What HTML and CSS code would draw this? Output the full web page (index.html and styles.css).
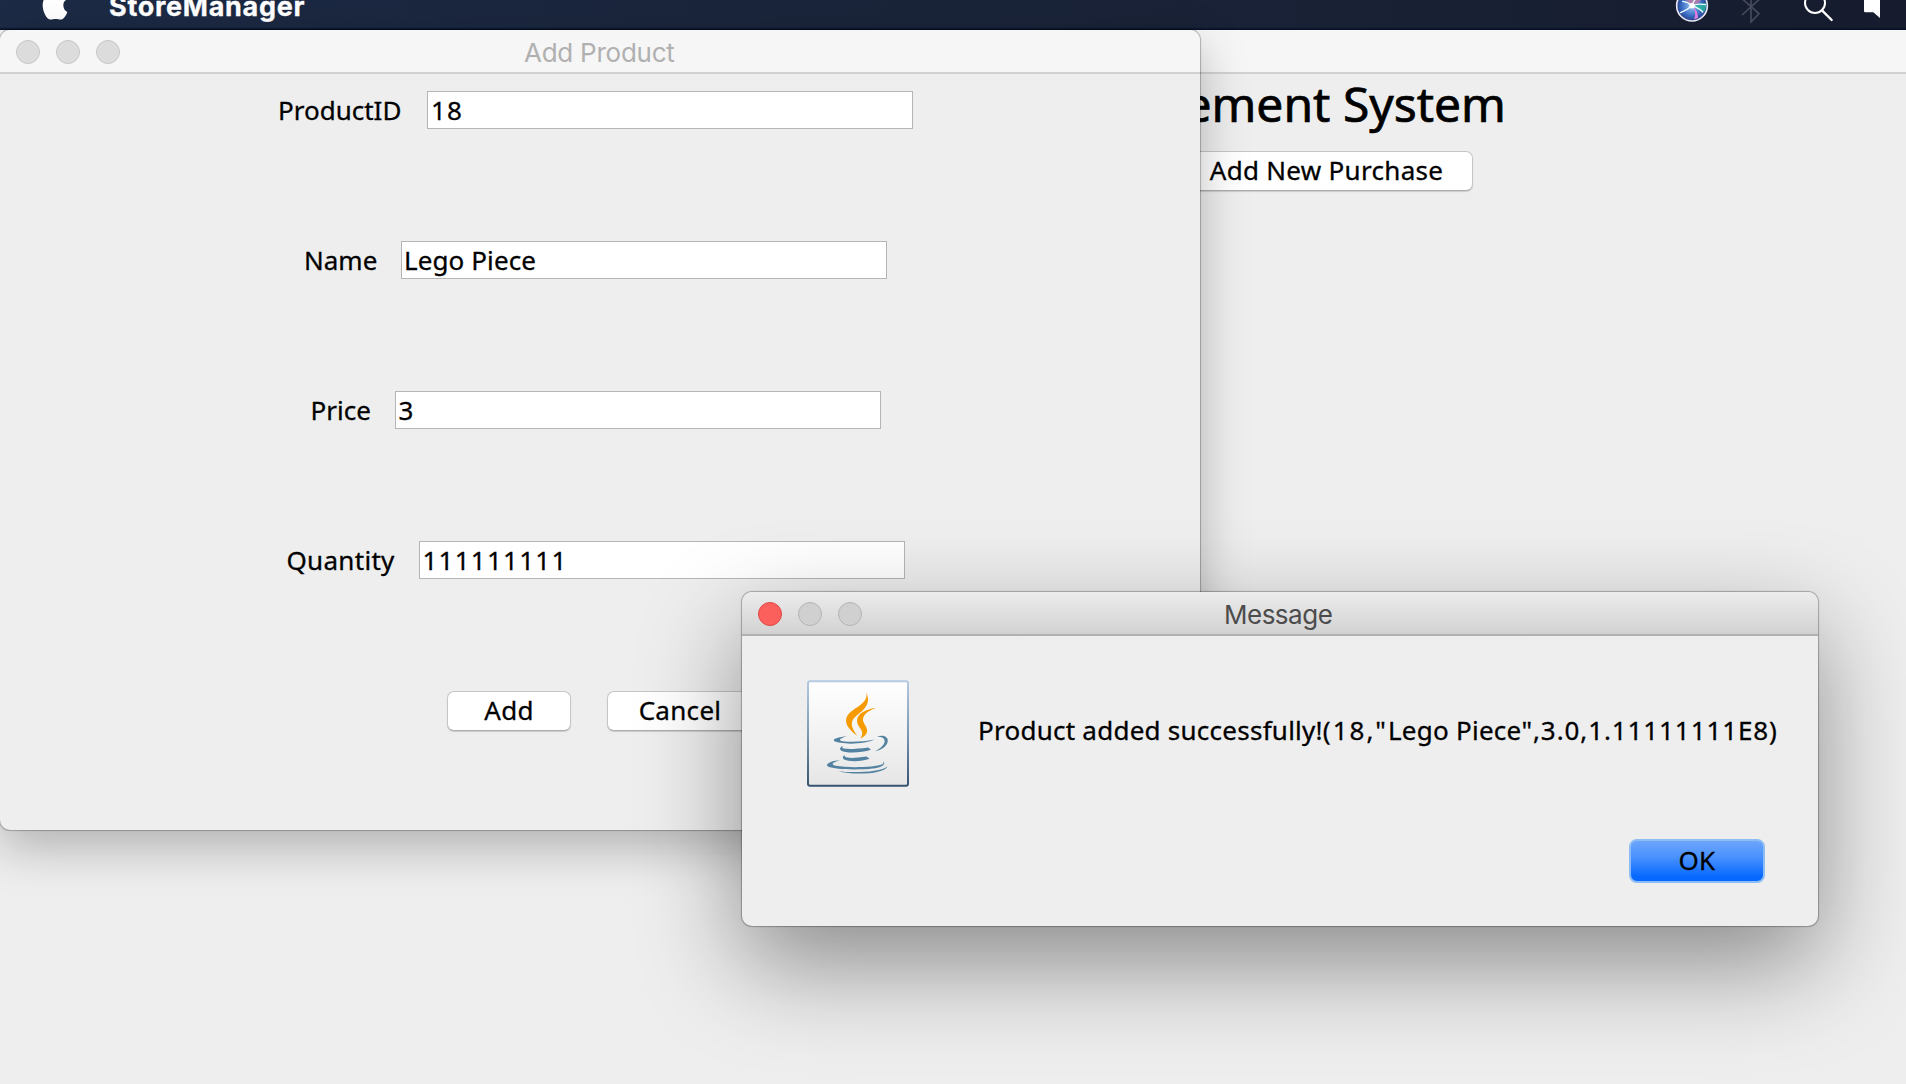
FILE: index.html
```html
<!DOCTYPE html>
<html lang="en">
<head>
<meta charset="utf-8">
<title>StoreManager</title>
<link rel="stylesheet" href="styles.css">
</head>
<body>
<div class="desktop">
  <header class="menubar">
    <svg class="apple" viewBox="0 0 81 60" aria-hidden="true"><path fill="#fff" d="M5 0H72C66 4 64 9 64 16c0 9 4 16 12 20-3 9-8 17-14 21-6 4-12 0-21 0s-15 4-21 0C11 52 3 34 2 18 2 10 3 5 5 0z"/></svg>
    <span class="app-name">StoreManager</span>
    <svg class="status" viewBox="0 0 900 90" aria-hidden="true">
      <defs>
        <radialGradient id="siri" cx=".5" cy=".5" r=".5"><stop offset="0" stop-color="#d9f4ff"/><stop offset=".3" stop-color="#6f9fe0"/><stop offset=".7" stop-color="#3568c0"/><stop offset="1" stop-color="#2a3f85"/></radialGradient>
      </defs>
      <circle cx="258" cy="17" r="46" fill="url(#siri)" stroke="#e8e6f4" stroke-width="5"/>
      <path d="M262 18Q296 0 290 -16L228 -22Q232 0 262 18z" fill="#b478a4" opacity=".85"/>
      <path d="M258 18L300 8Q302 30 292 36z" fill="#27b79b" opacity=".8"/>
      <path d="M258 18Q274 36 264 58L276 54Q276 30 258 18z" fill="#e87be0"/>
      <path d="M224 38Q246 28 258 17Q276 10 298 14M258 17Q246 6 230 4M258 17Q282 26 290 36M258 17Q264 0 272 -6" fill="none" stroke="#effcff" stroke-width="4" stroke-linecap="round"/>
      <circle cx="258" cy="17" r="8" fill="#fff"/>
      <path d="M408 -4L459 41L435 66V-20M408 45L461 -3" fill="none" stroke="#464b5b" stroke-width="5"/>
      <circle cx="627" cy="9" r="30" fill="none" stroke="#fff" stroke-width="6"/>
      <path d="M648 31L677 60" stroke="#fff" stroke-width="7" stroke-linecap="round"/>
      <path d="M774 0H822V54L802 37H778Q774 37 774 33z" fill="#fff"/>
    </svg>
  </header>

  <main class="window back">
    <div class="titlebar"></div>
    <h1 class="heading">Management System</h1>
    <div class="back-actions"><button class="btn purchase">Add New Purchase</button></div>
  </main>

  <section class="window form">
    <div class="titlebar">
      <i class="dot"></i><i class="dot"></i><i class="dot"></i>
      <span class="title t-form">Add Product</span>
    </div>
    <div class="fields">
      <label class="row"><span class="l-id">ProductID</span><span class="field">18</span></label>
      <label class="row"><span class="l-name">Name</span><span class="field alpha">Lego Piece</span></label>
      <label class="row"><span class="l-price">Price</span><span class="field">3</span></label>
      <label class="row"><span class="l-qty">Quantity</span><span class="field">111111111</span></label>
    </div>
    <div class="actions"><button class="btn add">Add</button><button class="btn cancel">Cancel</button></div>
  </section>

  <section class="window dialog">
    <div class="titlebar">
      <i class="dot close"></i><i class="dot"></i><i class="dot"></i>
      <span class="title t-msg">Message</span>
    </div>
    <div class="message">
      <svg class="java" viewBox="51 31 306 320" aria-hidden="true">
        <defs>
          <linearGradient id="frame" x1="0" y1="0" x2="0" y2="1"><stop offset="0" stop-color="#b5cae0"/><stop offset=".5" stop-color="#7c98b4"/><stop offset="1" stop-color="#36536f"/></linearGradient>
          <linearGradient id="paper" x1="0" y1="0" x2="0" y2="1"><stop offset="0" stop-color="#fff"/><stop offset="1" stop-color="#e6e6e6"/></linearGradient>
        </defs>
        <rect x="54" y="34" width="300" height="314" rx="6" fill="url(#paper)" stroke="url(#frame)" stroke-width="6"/>
        <g fill="#f59b00">
          <path d="M228 65C246 105 220 120 197 140C179 156 183 173 202 198C176 180 158 156 174 135C192 112 240 100 228 65z"/>
          <path d="M258 114C224 127 213 143 222 160C235 180 237 192 211 207C222 190 216 183 207 170C191 143 210 122 258 114z"/>
        </g>
        <g fill="#5382a1">
          <path d="M172 199C146 206 142 212 164 215C190 217 225 215 254 209C235 219 185 225 152 219C116 213 130 203 172 199z"/>
          <path d="M260 201C281 193 296 202 293 216C290 230 275 241 254 245C270 237 283 226 284 215C284 205 276 201 260 201z"/>
          <path d="M159 228C147 239 180 240 235 233L243 240C213 250 167 251 153 242C147 236 152 231 159 228z"/>
          <path d="M166 255C155 265 185 267 229 260L239 267C214 276 174 276 161 268C156 262 160 258 166 255z"/>
          <path d="M150 272C128 277 120 284 138 288C175 295 257 292 275 284C283 280 279 278 279 275C290 284 275 293 248 296C202 301 134 299 115 291C101 283 127 271 150 272z"/>
          <path d="M293 289C284 314 187 316 145 304C185 309 273 308 293 289z"/>
        </g>
      </svg>
      <p class="msg-text">Product added successfully!<span class="id-part">(18,"</span>Lego Piece<span class="num">",3.0,1.11111111E8)</span></p>
    </div>
    <div class="dialog-actions"><button class="btn ok">OK</button></div>
  </section>
</div>
</body>
</html>
```
FILE: styles.css
```css
* { box-sizing: border-box; }
body { margin: 0; }
.desktop { position: relative; width: 1906px; height: 1084px; overflow: hidden; background: #1c2a44; font: 26px/36px "Noto Sans", sans-serif; color: #000; -webkit-text-stroke: .3px; }
.menubar { display: flex; align-items: flex-start; height: 30px; background: linear-gradient(#0000 27px, #020e24), linear-gradient(90deg, #1c2a45, #1a2439 50%, #161c2e); }
.apple { width: 27px; height: 20px; margin-left: 42px; flex: none; }
.app-name { margin: -11px 0 0 40px; font: bold 27px/36px Inter, sans-serif; letter-spacing: .7px; color: #fff; white-space: nowrap; }
.status { width: 300px; height: 30px; margin-left: auto; }

.window { position: absolute; background: #eee; }
.titlebar { display: flex; align-items: center; gap: 16px; height: 44px; padding-top: 2px; background: #f6f6f6; border-bottom: 2px solid #d1d1d1; }
.title { padding-top: 2px; font-family: Inter, sans-serif; white-space: nowrap; -webkit-text-stroke: 0; }
.dot { width: 24px; height: 24px; border-radius: 50%; background: #dcdcdc; border: 1px solid #c8c8c8; }
.btn { height: 40px; padding: 0 0 2px; border: 1px solid #c6c6c6; border-bottom-color: #adadad; border-radius: 7px; background: #fff; box-shadow: 0 1px 1px rgba(0,0,0,.15); font: inherit; color: #000; letter-spacing: .3px; white-space: nowrap; }

.back { left: 0; top: 30px; width: 1906px; height: 1054px; }
.heading { margin: 0 400px 0 0; font-size: 48px; line-height: 60px; font-weight: 400; text-align: right; -webkit-text-stroke: .7px; }
.back-actions { display: flex; justify-content: flex-end; padding: 17px 433px 0 0; }
.purchase { width: 293px; }

.form { left: 0; top: 30px; width: 1200px; height: 800px; border-radius: 10px; box-shadow: 0 0 1px 1px rgba(0,0,0,.25), 0 17px 48px rgba(0,0,0,.26); }
.form .titlebar { padding-left: 16px; border-radius: 10px 10px 0 0; }
.t-form { margin-left: 388px; color: #b0b0b0; letter-spacing: -.25px; }
.fields { display: flex; flex-direction: column; gap: 112px; padding-top: 17px; }
.row { display: flex; justify-content: center; padding-right: 11px; }
.l-id { width: 151px; } .l-name { width: 99px; } .l-price { width: 86px; } .l-qty { width: 134px; }
.row span:first-child { padding-left: 2px; line-height: 38px; white-space: nowrap; }
.row .l-qty { padding-left: 1px; letter-spacing: .3px; }
.field { width: 486px; height: 38px; padding-left: 3px; border: 1px solid #b5b5b5; background: #fff; letter-spacing: 1.25px; }
.alpha { padding-left: 2px; letter-spacing: .1px; }
.actions { display: flex; justify-content: center; gap: 36px; padding-top: 112px; }
.add { width: 124px; } .cancel { width: 146px; }

.dialog { left: 742px; top: 592px; width: 1076px; height: 334px; border-radius: 10px; box-shadow: 0 0 1px 1px rgba(0,0,0,.28), 0 38px 100px rgba(0,0,0,.42); }
.dialog .titlebar { padding-left: 16px; border-radius: 10px 10px 0 0; background: linear-gradient(#ececec, #d2d2d2); border-color: #b1b1b1; }
.dialog .dot { background: #d0d0d0; border-color: #b4b4b4; }
.dialog .close { background: #fc605c; border-color: #df4744; }
.t-msg { margin-left: 346px; color: #4c4c4c; letter-spacing: -.5px; }
.message { display: flex; align-items: flex-start; padding: 44px 0 0 65px; }
.java { width: 102px; height: 107px; flex: none; }
.msg-text { margin: 32px 0 0 69px; letter-spacing: .25px; white-space: nowrap; }
.id-part { letter-spacing: 2px; }
.num { letter-spacing: .9px; }
.dialog-actions { display: flex; justify-content: flex-end; padding: 52px 53px 0 0; }
.ok { width: 136px; height: 44px; border: 2px solid #8bbcf3; border-radius: 8px; background: linear-gradient(#6ca5fb, #4a92fd 40%, #0768ff 90%); box-shadow: none; }
```
